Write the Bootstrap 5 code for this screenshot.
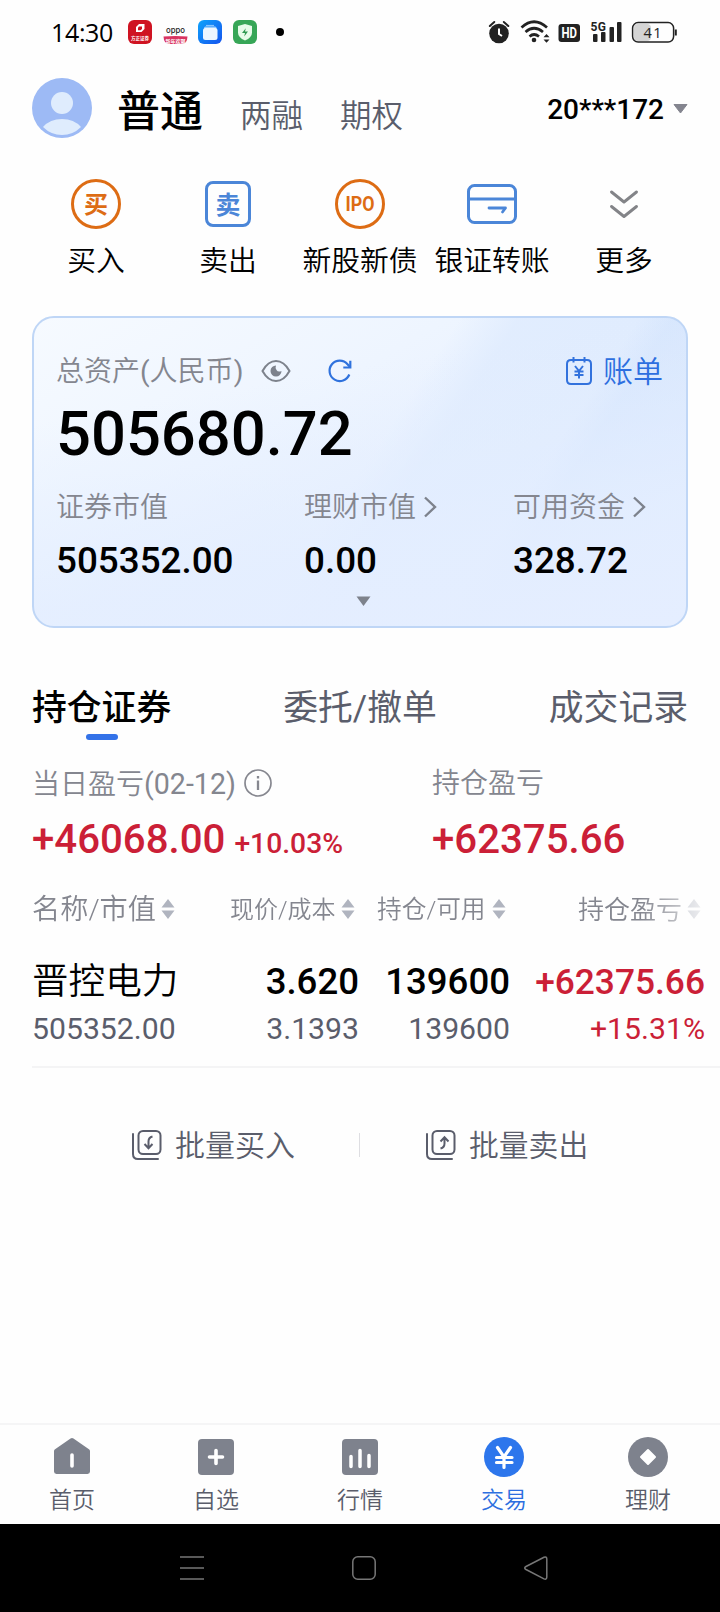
<!DOCTYPE html>
<html lang="zh-CN">
<head>
<meta charset="utf-8">
<meta name="viewport" content="width=device-width, initial-scale=1">
<title>交易</title>
<link rel="stylesheet" href="https://cdn.jsdelivr.net/npm/bootstrap@5.3.0/dist/css/bootstrap.min.css">
<style>
:root{--ink:#000;--slate:#5a5d6b;--mute:#84868f;--blue:#2d6fe0;--red:#cb1f37;--orange:#dd6c14}
body{font-family:Roboto,"Noto Sans CJK SC",sans-serif;background:#fefefe;color:var(--ink);width:720px;height:1612px;overflow:hidden;line-height:1}
body>*{flex-shrink:0}
svg{display:block;flex:none}
.c-slate{color:var(--slate)}.c-mute{color:var(--mute)}.c-blue{color:var(--blue)}.c-red{color:var(--red)}
.med{font-weight:500}.demi{font-weight:350}
.ln{line-height:40px;height:40px;white-space:nowrap}
.status{height:64px;padding:0 41px 0 51px}
.clock{font:400 25px/30px "Open Sans","Noto Sans",sans-serif;width:77px;letter-spacing:-.35px}
.topbar{height:92px;padding:0 32px}
.t-main{font-size:43px}.t-side{font-size:31.5px}
.acct{font-size:28px}
.quick{height:160px;padding:23px 30px 0}
.quick>div{width:132px}
.quick .ln{font-size:28.8px;margin-top:12px}
.assets{height:312px;margin:0 32px;border:2px solid #bfd6f6;border-radius:22px;background:
 linear-gradient(170deg,rgba(228,238,255,0) 25%,rgba(228,238,255,.85) 70%,#e5eeff 100%),
 linear-gradient(123deg,rgba(213,229,253,0) 71%,rgba(213,229,253,.75) 75%,rgba(219,232,253,.6) 100%),
 linear-gradient(123deg,rgba(224,236,254,0) 50%,rgba(224,236,254,.9) 57%,#deebfe 100%),
 linear-gradient(150deg,#f6faff 0%,#eef5ff 35%,#e6effe 65%,#e4eeff 100%);padding:33px 23px 0 22px}
.total{font-size:61.5px;line-height:62px;height:62px;margin-top:12px}
.fs28{font-size:28px}.fs30{font-size:30.200px}.fs36{font-size:36.600px}.fs37{font-size:36.800px}
.figures{grid-template-columns:248px 209px 1fr;margin-top:23px}
.figures .val{margin-top:13px}
.tabs{height:112px;padding:60px 32px 0}
.tabs .ln{font-size:34.8px}
.bar{width:32px;height:6px;border-radius:3px;background:#3372e8;margin-top:6px}
.pnl{grid-template-columns:400px 1fr;padding:24px 0 0 32px;height:150px}
.pnl .big{font-size:40.200px}
.heads{height:40px;padding-left:32px;-webkit-mask-image:linear-gradient(90deg,#000 640px,rgba(0,0,0,.2) 705px);mask-image:linear-gradient(90deg,#000 640px,rgba(0,0,0,.2) 705px)}
.hold{height:40px;grid-template-columns:192px 135px 151px 1fr;padding:0 15px 0 32px}
.rule{height:2px;background:#f4f4f5;margin:17px 0 0 32px}
.batch{height:40px;margin-top:57px}
.batch i{width:1px;height:24px;background:#dedee2}
.tabbar{margin-top:258px;height:101px;border-top:2px solid #f5f5f6;padding-top:12px}
.tabbar>div{width:144px}
.tabbar .ln{font-size:23px;line-height:30px;height:30px;margin-top:9px}
.sysnav{height:88px;background:#000;padding-top:31px}
.glyph{font-family:"Noto Sans CJK SC",sans-serif}
</style>
</head>
<body class="d-flex flex-column">
<header class="status d-flex align-items-center">
 <div class="clock">14:30</div>
 <svg width="24" height="24" viewBox="0 0 24 24"><rect width="24" height="24" rx="6" fill="#cf1322"/><path d="M11 4h5.500v5l-3 3H8V7z" fill="#fff"/><path d="M11 6.500h3V9l-1.500 1.200H10V7.500z" fill="#cf1322"/><text x="12" y="20" font-size="4.500" font-weight="700" text-anchor="middle" fill="#fff">方正证券</text></svg>
 <svg style="margin-left:11px" width="25" height="24" viewBox="0 0 25 24"><text x="12.500" y="12.500" font-size="9" font-weight="500" font-family="Inter" textLength="19" lengthAdjust="spacingAndGlyphs" text-anchor="middle" fill="#222">oppo</text><path d="M.5 16.500Q12 15.500 24.500 16.500Q24 24 19 24H6Q1 24 .5 16.500z" fill="#d83461"/><text x="12.500" y="22.500" font-size="5" font-weight="700" text-anchor="middle" fill="#fff">新年欢聚</text></svg>
 <svg style="margin-left:10px" width="24" height="24" viewBox="0 0 24 24"><defs><linearGradient id="bl" x1="0" y1="0" x2="1" y2="1"><stop stop-color="#0fa3fb"/><stop offset="1" stop-color="#1554ee"/></linearGradient></defs><rect width="24" height="24" rx="6" fill="url(#bl)"/><path d="M8 5.500h8" stroke="#86c4ff" stroke-width="1.200"/><rect x="6" y="6.500" width="12.500" height="5" rx="1.500" fill="#9bcfff"/><rect x="5" y="8" width="14.500" height="12" rx="2.500" fill="#eef6ff"/></svg>
 <svg style="margin-left:11px" width="24" height="24" viewBox="0 0 24 24"><rect width="24" height="24" rx="6" fill="#37a657"/><path d="M12 4l7 2v6.500q0 5-7 8-7-3-7-8V6z" fill="#e6fbe9"/><path d="M12.800 8.200L9 13h3l-.8 3.500L15 11.500h-3z" fill="#2d9850"/></svg>
 <svg style="margin-left:19px" width="8" height="8"><circle cx="4" cy="4" r="4" fill="#000"/></svg>
 <svg class="ms-auto" width="194" height="28" viewBox="485 18 194 28" fill="#222">
  <circle cx="499" cy="33.500" r="9.800"/><path d="M489.800 26l4.500-4M508.300 26l-4.500-4" stroke="#222" stroke-width="2" stroke-linecap="round"/><path d="M499 28.500v5.500l3 2" fill="none" stroke="#fff" stroke-width="2"/>
  <g fill="none" stroke="#222" stroke-width="2.700"><path d="M521.500 27.500q12.500-11.500 25.500 0"/><path d="M525.500 32q8.500-7.500 17.500 0"/><path d="M529.500 36.500q4.500-4 9.500 0"/></g><circle cx="534" cy="40" r="2.300"/><path d="M543.500 37.300l3-3.300 3 3.300zM543.500 39.500h6l-3 3.300z"/>
  <rect x="558.500" y="24" width="21.500" height="18" rx="3"/><text x="569.300" y="38.300" font-size="14.500" font-weight="700" textLength="15.500" lengthAdjust="spacingAndGlyphs" text-anchor="middle" fill="#fff">HD</text>
  <text x="590.500" y="30.500" font-size="12" font-weight="700" textLength="15.500">5G</text>
  <rect x="593" y="34" width="4.500" height="8" rx="1"/><rect x="601" y="32" width="4.500" height="10" rx="1"/><rect x="609.500" y="27" width="4.500" height="15" rx="1"/><rect x="617" y="22" width="4.500" height="20" rx="1"/>
  <rect x="634" y="24" width="17" height="17" rx="4" fill="#d5d5d5"/><rect x="632.600" y="22.600" width="41" height="19.500" rx="5.500" fill="none" stroke="#222" stroke-width="1.500"/><path d="M675.800 29.500v6" stroke="#222" stroke-width="2"/><text x="652.500" y="38" font-size="14.500" font-family="Open Sans" textLength="18" text-anchor="middle">41</text>
 </svg>
</header>

<section class="topbar d-flex align-items-center">
 <svg style="margin-top:-4px" width="60" height="60" viewBox="0 0 60 60"><circle cx="30" cy="30" r="30" fill="#9dbaf5"/><circle cx="30" cy="25" r="11" fill="#dfecfd"/><path d="M11 49Q18 41 30 41T49 49Q41 57 30 57T11 49z" fill="#dfecfd"/></svg>
 <div class="t-main ln med" style="margin:4px 0 0 25px">普通</div>
 <div class="t-side ln c-slate demi" style="margin:13px 0 0 37px">两融</div>
 <div class="t-side ln c-slate demi" style="margin:13px 0 0 37px">期权</div>
 <div class="acct ln med ms-auto">20***172</div>
 <svg style="margin:-3px 0 0 9px" width="15" height="10" viewBox="0 0 15 10"><path d="M1 .5h13L7.500 9z" fill="#84858f" stroke="#84858f" stroke-linejoin="round"/></svg>
</section>

<nav class="quick d-flex text-center">
 <div class="d-flex flex-column align-items-center"><svg width="50" height="50" viewBox="0 0 50 50"><circle cx="25" cy="25" r="23.500" fill="none" stroke="#dd6c14" stroke-width="3"/><text class="glyph" x="25" y="33.500" font-size="24" font-weight="700" text-anchor="middle" fill="#dd6c14">买</text></svg><div class="ln demi">买入</div></div>
 <div class="d-flex flex-column align-items-center"><svg width="50" height="50" viewBox="0 0 50 50"><rect x="3.500" y="3.500" width="43" height="43" rx="6.500" fill="none" stroke="#4b86d8" stroke-width="3"/><text class="glyph" x="25" y="34.500" font-size="25" font-weight="700" text-anchor="middle" fill="#4b86d8">卖</text></svg><div class="ln demi">卖出</div></div>
 <div class="d-flex flex-column align-items-center"><svg width="50" height="50" viewBox="0 0 50 50"><circle cx="25" cy="25" r="23.500" fill="none" stroke="#dd6c14" stroke-width="3"/><text x="25" y="32" font-size="20" font-weight="700" textLength="29" lengthAdjust="spacingAndGlyphs" text-anchor="middle" fill="#dd6c14">IPO</text></svg><div class="ln demi">新股新债</div></div>
 <div class="d-flex flex-column align-items-center"><svg width="50" height="50" viewBox="0 0 50 50" fill="none" stroke="#4b86d8" stroke-width="3"><rect x="1.500" y="6.500" width="47" height="37" rx="6"/><path d="M1.500 20h47"/><path d="M22 29h16.500l-3 4" stroke-width="2.800" stroke-linecap="round" stroke-linejoin="round"/></svg><div class="ln demi">银证转账</div></div>
 <div class="d-flex flex-column align-items-center"><svg width="50" height="50" viewBox="0 0 50 50" fill="none" stroke="#838488" stroke-width="2.900" stroke-linecap="round" stroke-linejoin="round"><path d="M12.500 13L25 23 37.500 13M12.500 27.500L25 37.500 37.500 27.500"/></svg><div class="ln demi">更多</div></div>
</nav>

<section class="assets">
 <div class="d-flex align-items-center">
  <div class="ln fs28 c-mute demi" style="padding-top:1px"><span>总资产</span><span class="fw-normal">(</span>人民币<span class="fw-normal">)</span></div>
  <svg style="margin-left:18px" width="30" height="24" viewBox="0 0 30 24"><path d="M1.500 12Q7 2 15 2T28.500 12Q23 22 15 22T1.500 12z" fill="none" stroke="#7d828c" stroke-width="2"/><path d="M15 6.500A5.500 5.500 0 1 0 20.500 12Q17 13.500 15.500 11T15 6.500z" fill="#7d828c"/></svg>
  <svg style="margin-left:36px" width="26" height="26" viewBox="0 0 26 26" fill="none" stroke="#2f72dd" stroke-width="2.200"><path d="M22.300 16.500A10.200 10.200 0 1 1 20.500 6.200L23 9"/><path d="M23.300 2.800v6.700h-7"/></svg>
  <svg class="ms-auto" width="28" height="30" viewBox="0 0 28 30" fill="none" stroke="#3272dd" stroke-width="2"><path d="M2 8Q2 4 6 4H22Q26 4 26 8V24Q26 28 22 28H6Q2 28 2 24z"/><path d="M8.500 1v5.500M19.500 1v5.500M10 10l4 5 4-5M9.500 15.500h9M9.500 19h9M14 15v7.500"/></svg>
  <div class="ln c-blue demi" style="font-size:30px;margin-left:10px;padding-top:1px">账单</div>
 </div>
 <div class="total med">505680.72</div>
 <div class="figures d-grid">
  <div><div class="ln fs28 c-mute demi">证券市值</div><div class="ln fs37 med val">505352.00</div></div>
  <div><div class="d-flex align-items-center"><div class="ln fs28 c-mute demi">理财市值</div><svg style="margin:-3px 0 0 7px" width="14" height="22" viewBox="0 0 14 22"><path d="M2 1.500L12 11 2 20.500" fill="none" stroke="#7d828c" stroke-width="2.400"/></svg></div><div class="ln fs37 med val">0.00</div></div>
  <div><div class="d-flex align-items-center"><div class="ln fs28 c-mute demi">可用资金</div><svg style="margin:-3px 0 0 7px" width="14" height="22" viewBox="0 0 14 22"><path d="M2 1.500L12 11 2 20.500" fill="none" stroke="#7d828c" stroke-width="2.400"/></svg></div><div class="ln fs37 med val">328.72</div></div>
 </div>
 <svg style="margin:15px 0 0 300px" width="15" height="10" viewBox="0 0 15 10"><path d="M.5 .5h14L7.500 10z" fill="#7d828c"/></svg>
</section>

<nav class="tabs d-flex justify-content-between">
 <div class="d-flex flex-column align-items-center"><div class="ln med">持仓证券</div><div class="bar"></div></div>
 <div class="ln c-slate">委托/撤单</div>
 <div class="ln c-slate">成交记录</div>
</nav>

<section class="pnl d-grid">
 <div>
  <div class="d-flex align-items-center c-mute"><div class="ln fs28 demi">当日盈亏<span class="fw-normal" style="font-size:28.6px">(02-12)</span></div><svg style="margin:-2px 0 0 8px" width="28" height="28" viewBox="0 0 28 28"><circle cx="14" cy="14" r="13" fill="none" stroke="#86878f" stroke-width="1.700"/><path d="M14 11.500v9.500M14 7v2.600" stroke="#86878f" stroke-width="2.300"/></svg></div>
  <div class="d-flex align-items-baseline c-red med" style="margin-top:16px"><div class="ln big">+46068.00</div><div class="ln" style="font-size:28.3px;margin-left:9px">+10.03%</div></div>
 </div>
 <div><div class="ln fs28 c-mute demi">持仓盈亏</div><div class="ln big c-red med" style="margin-top:16px">+62375.66</div></div>
</section>

<svg width="0" height="0" class="position-absolute"><symbol id="sort" viewBox="0 0 14 20"><path d="M7 0l6.500 8.500h-13zM7 20l6.500-8.500h-13z" fill="#b0b4bf"/></symbol></svg>
<section class="heads d-flex align-items-center c-mute demi">
 <div class="d-flex align-items-center" style="width:198px"><div class="ln" style="font-size:28.2px">名称/市值</div><svg style="margin:-2px 0 0 5px" width="14" height="20"><use href="#sort"/></svg></div>
 <div class="d-flex align-items-center" style="width:147px"><div class="ln" style="font-size:24px">现价/成本</div><svg style="margin:-2px 0 0 5px" width="14" height="20"><use href="#sort"/></svg></div>
 <div class="d-flex align-items-center" style="width:201px"><div class="ln" style="font-size:24.7px">持仓/可用</div><svg style="margin:-2px 0 0 6px" width="14" height="20"><use href="#sort"/></svg></div>
 <div class="d-flex align-items-center"><div class="ln" style="font-size:26px">持仓盈亏</div><svg style="margin:-2px 0 0 5px" width="14" height="20"><use href="#sort"/></svg></div>
</section>

<section class="hold d-grid text-end" style="margin-top:32px">
 <div class="ln fs36 text-start demi">晋控电力</div><div class="ln fs36 med">3.620</div><div class="ln fs36 med">139600</div><div class="ln med c-red" style="font-size:35.3px">+62375.66</div>
</section>
<section class="hold d-grid text-end c-slate" style="margin-top:7px">
 <div class="ln fs30 text-start">505352.00</div><div class="ln fs30">3.1393</div><div class="ln fs30">139600</div><div class="ln fs30 c-red">+15.31%</div>
</section>
<div class="rule"></div>

<section class="batch d-flex align-items-center c-slate">
 <svg style="margin-left:131px" width="32" height="32" viewBox="0 0 32 32" fill="none" stroke="#5a5d6b" stroke-width="2"><rect x="7.500" y="2" width="22" height="23" rx="4.500"/><path d="M2 5v20q0 5 5 5h20" stroke-linecap="round"/><path d="M21.500 7.500q-4 1-4 5v6.500M13.500 15l4 4.200 4-4.200"/></svg>
 <div class="ln demi" style="font-size:30px;margin-left:12px;width:184px;padding-top:1px">批量买入</div><i></i>
 <svg style="margin-left:65px" width="32" height="32" viewBox="0 0 32 32" fill="none" stroke="#5a5d6b" stroke-width="2"><rect x="7.500" y="2" width="22" height="23" rx="4.500"/><path d="M2 5v20q0 5 5 5h20" stroke-linecap="round"/><path d="M15.500 19.500q4-1 4-5V8.500M15.500 12.500L19.500 8.300l4 4.200"/></svg>
 <div class="ln demi" style="font-size:29.8px;margin-left:12px;padding-top:1px">批量卖出</div>
</section>

<nav class="tabbar d-flex c-slate">
 <div class="d-flex flex-column align-items-center"><svg width="40" height="40" viewBox="0 0 40 40"><path d="M20 3L35.500 14V35H4.500V14z" fill="#7e828d" stroke="#7e828d" stroke-width="5" stroke-linejoin="round" transform="translate(20 20) scale(1 .97) translate(-20 -20)"/><path d="M20 18v11" stroke="#fff" stroke-width="3.600" stroke-linecap="round"/></svg><div class="ln demi">首页</div></div>
 <div class="d-flex flex-column align-items-center"><svg width="40" height="40" viewBox="0 0 40 40"><rect x="2" y="2" width="36" height="36" rx="4" fill="#7e828d"/><path d="M13.500 20h13M20 13.500v13" stroke="#fff" stroke-width="3.600" stroke-linecap="round"/></svg><div class="ln demi">自选</div></div>
 <div class="d-flex flex-column align-items-center"><svg width="40" height="40" viewBox="0 0 40 40"><rect x="2" y="2" width="36" height="36" rx="4" fill="#7e828d"/><path d="M11 19.500v10M20 13.500v16M29 18.500v11" stroke="#fff" stroke-width="3.500" stroke-linecap="round"/></svg><div class="ln demi">行情</div></div>
 <div class="d-flex flex-column align-items-center c-blue"><svg width="40" height="40" viewBox="0 0 40 40"><circle cx="20" cy="20" r="20" fill="#2d76ec"/><path d="M13.500 10.500L20 20l6.500-9.500M12.500 20.500h15.500M12.500 25.500h15.500M20 20v10.500" fill="none" stroke="#fff" stroke-width="3.200" stroke-linecap="round"/></svg><div class="ln demi">交易</div></div>
 <div class="d-flex flex-column align-items-center"><svg width="40" height="40" viewBox="0 0 40 40"><circle cx="20" cy="20" r="20" fill="#7e828d"/><path d="M20 13l7 7-7 7-7-7z" fill="#fff" stroke="#fff" stroke-width="2" stroke-linejoin="round"/></svg><div class="ln demi">理财</div></div>
</nav>

<footer class="sysnav d-flex">
 <svg style="margin-left:180px" width="24" height="26" viewBox="0 0 24 26"><path d="M0 2h24M0 13h24M0 24h24" stroke="#777" stroke-width="1.700"/></svg>
 <svg style="margin-left:147px" width="26" height="26" viewBox="0 0 26 26"><rect x="1.800" y="1.800" width="22.400" height="22.400" rx="5" fill="none" stroke="#777" stroke-width="1.500"/></svg>
 <svg style="margin-left:146px" width="26" height="26" viewBox="0 0 26 26"><path d="M3 11.500L21 2.300q2.800-1 2.800 1.800v18q0 2.800-2.800 1.800L3 14.500q-2.600-1.500 0-3z" fill="none" stroke="#777" stroke-width="1.500"/></svg>
</footer>
<script src="https://cdn.jsdelivr.net/npm/bootstrap@5.3.0/dist/js/bootstrap.bundle.min.js"></script>
</body>
</html>
